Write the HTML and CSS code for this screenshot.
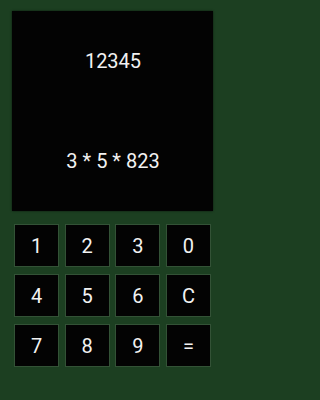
FILE: index.html
```html
<!DOCTYPE html>
<html>
<head>
<meta charset="utf-8">
<link rel="stylesheet" href="styles.css">
</head>
<body>
<div class="app">
  <div class="display">
    <div class="result">12345</div>
    <div class="expr">3 * 5 * 823</div>
  </div>
  <div class="keypad">
    <div class="key">1</div>
    <div class="key">2</div>
    <div class="key">3</div>
    <div class="key">0</div>
    <div class="key">4</div>
    <div class="key">5</div>
    <div class="key">6</div>
    <div class="key">C</div>
    <div class="key">7</div>
    <div class="key">8</div>
    <div class="key">9</div>
    <div class="key">=</div>
  </div>
</div>
</body>
</html>
```
FILE: styles.css
```css
html, body {
  margin: 0;
  padding: 0;
  height: 100%;
  background: #1c3f21;
}
.app {
  width: 225px;
  height: 400px;
  box-sizing: border-box;
  padding: 11px 12px 0 12px;
  font-family: Roboto, "Noto Sans", sans-serif;
  color: #f2f2f2;
}
.display {
  width: 201px;
  height: 200px;
  background: #030303;
  box-shadow: 0 0 2px rgba(0,0,0,0.6);
  display: flex;
  flex-direction: column;
  align-items: center;
  padding-left: 1px;
  box-sizing: border-box;
}
.result {
  font-size: 20px;
  line-height: 24px;
  margin-top: 38px;
}
.expr {
  font-size: 20px;
  line-height: 24px;
  margin-top: 76px;
}
.keypad {
  margin-top: 14px;
  margin-left: 3px;
  display: grid;
  grid-template-columns: repeat(4, 43px);
  grid-auto-rows: 41px;
  column-gap: 7.67px;
  row-gap: 9px;
}
.key {
  background: #030303;
  box-shadow: 0 0 0 1px rgba(120,140,120,0.25);
  display: flex;
  align-items: center;
  justify-content: center;
  font-size: 20px;
}
```
